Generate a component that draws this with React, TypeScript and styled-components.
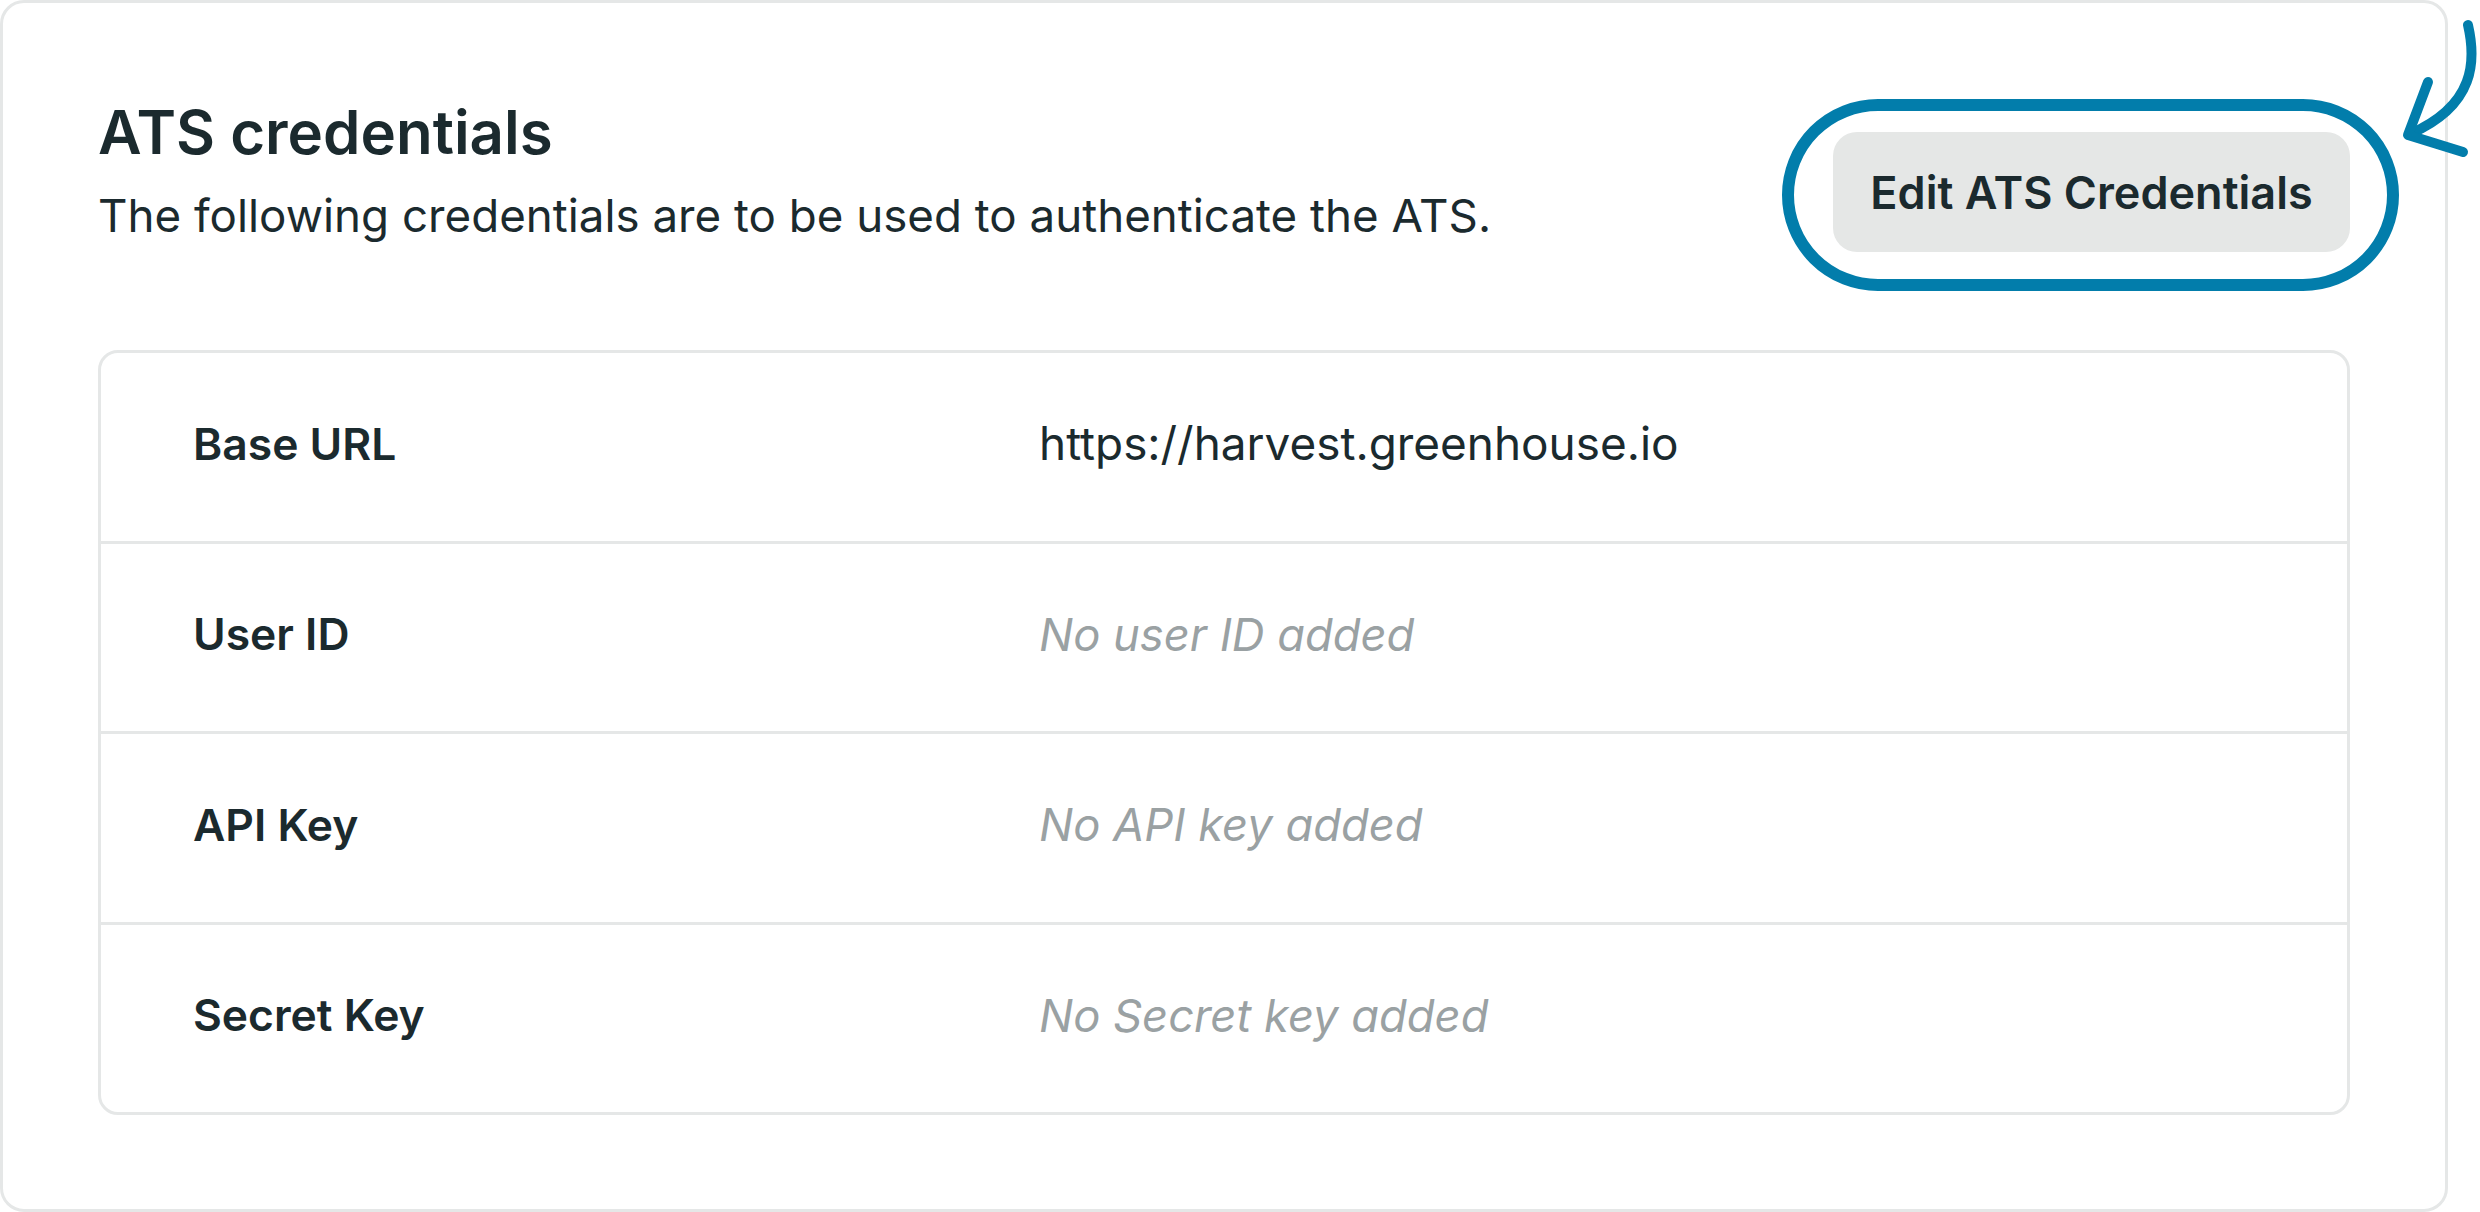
import React from "react";
import styled, { createGlobalStyle } from "styled-components";

const GlobalStyle = createGlobalStyle`
  html, body {
    margin: 0;
    padding: 0;
    background: #ffffff;
  }
  body {
    font-family: Inter, "Noto Sans", "Liberation Sans", sans-serif;
    color: #1b2a2e;
    -webkit-font-smoothing: antialiased;
  }
  * { box-sizing: border-box; }
`;

const Page = styled.div`
  position: relative;
  width: 2480px;
  height: 1212px;
  overflow: hidden;
`;

const Card = styled.section`
  width: 2448px;
  height: 1212px;
  border: 3px solid #e5e7e7;
  border-radius: 24px;
  background: #ffffff;
  padding: 94px 95px 94px 95px;
  display: flex;
  flex-direction: column;
`;

const Header = styled.header`
  display: flex;
  justify-content: space-between;
  align-items: flex-start;
`;

const Intro = styled.div`
  display: flex;
  flex-direction: column;
  gap: 19px;
`;

const Title = styled.h2`
  margin: 0;
  font-size: 60px;
  line-height: 70px;
  font-weight: 600;
  color: #1b2a2e;
`;

const Subtitle = styled.p`
  margin: 0;
  font-size: 45.7px;
  line-height: 60px;
  font-weight: 400;
  color: #1b2a2e;
`;

const ButtonWrap = styled.div`
  position: relative;
  margin-top: 35px;
`;

const EditButton = styled.button`
  display: flex;
  align-items: center;
  justify-content: center;
  width: 517px;
  height: 120px;
  padding: 0;
  border: none;
  border-radius: 24px;
  background: #e5e7e6;
  font-family: Inter, "Noto Sans", "Liberation Sans", sans-serif;
  font-size: 45px;
  font-weight: 600;
  white-space: nowrap;
  color: #1b2a2e;
  cursor: pointer;
`;

const Ring = styled.span`
  position: absolute;
  left: -51px;
  right: -49px;
  top: -33px;
  bottom: -39px;
  border: 12px solid #027dab;
  border-radius: 96px;
  pointer-events: none;
`;

const Table = styled.div`
  margin-top: 98px;
  border: 3px solid #e5e7e7;
  border-radius: 20px;
  display: flex;
  flex-direction: column;
`;

const Row = styled.div`
  display: grid;
  grid-template-columns: 846px 1fr;
  align-items: center;
  height: 187.5px;
  padding: 0 92px 6px;
  & + & {
    border-top: 3px solid #e5e7e7;
    height: 190.5px;
  }
`;

const Label = styled.span`
  font-size: 44.4px;
  font-weight: 600;
  color: #1b2a2e;
`;

const Value = styled.span<{ $empty?: boolean }>`
  font-size: ${(p) => (p.$empty ? "45.3px" : "45.9px")};
  font-weight: 400;
  font-style: ${(p) => (p.$empty ? "italic" : "normal")};
  color: ${(p) => (p.$empty ? "#9aa1a3" : "#1b2a2e")};
`;

const Arrow = styled.svg`
  position: absolute;
  left: 2380px;
  top: 0;
  width: 100px;
  height: 180px;
  pointer-events: none;
`;

const rows: { label: string; value: string; empty?: boolean }[] = [
  { label: "Base URL", value: "https://harvest.greenhouse.io" },
  { label: "User ID", value: "No user ID added", empty: true },
  { label: "API Key", value: "No API key added", empty: true },
  { label: "Secret Key", value: "No Secret key added", empty: true },
];

export default function App() {
  return (
    <Page>
      <GlobalStyle />
      <Card>
        <Header>
          <Intro>
            <Title>ATS credentials</Title>
            <Subtitle>The following credentials are to be used to authenticate the ATS.</Subtitle>
          </Intro>
          <ButtonWrap>
            <EditButton type="button">Edit ATS Credentials</EditButton>
            <Ring />
          </ButtonWrap>
        </Header>
        <Table>
          {rows.map((r) => (
            <Row key={r.label}>
              <Label>{r.label}</Label>
              <Value $empty={r.empty}>{r.value}</Value>
            </Row>
          ))}
        </Table>
      </Card>
      <Arrow viewBox="0 0 100 180" fill="none">
        <path
          d="M88 25 C96 60, 96 105, 30 134"
          stroke="#027dab"
          strokeWidth="10"
          strokeLinecap="round"
          fill="none"
        />
        <path
          d="M48 82 L28 135 L83 152"
          stroke="#027dab"
          strokeWidth="10"
          strokeLinecap="round"
          strokeLinejoin="round"
          fill="none"
        />
      </Arrow>
    </Page>
  );
}
